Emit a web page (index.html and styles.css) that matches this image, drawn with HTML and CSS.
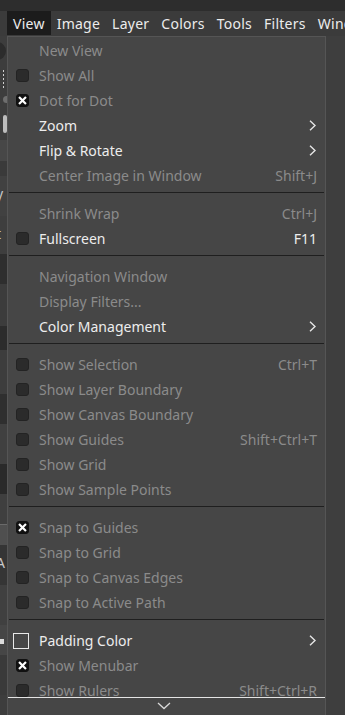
FILE: index.html
```html
<!DOCTYPE html>
<html>
<head>
<meta charset="utf-8">
<link rel="stylesheet" href="styles.css">
</head>
<body>
<div class="screen">
  <div class="topstrip"></div>
  <div class="menubar">
    <span class="mb-item active">View</span>
    <span class="mb-item">Image</span>
    <span class="mb-item">Layer</span>
    <span class="mb-item">Colors</span>
    <span class="mb-item">Tools</span>
    <span class="mb-item">Filters</span>
    <span class="mb-item">Windows</span>
  </div>
  <div class="workspace">
    <div class="dock">
      <div class="band b1"><span class="dot-circle"></span></div>
      <div class="band b2"><span class="dots"></span></div>
      <div class="band b3"><span class="grey-dot"></span></div>
      <div class="band b4"><span class="squiggle"></span></div>
      <div class="band b5"></div>
      <div class="band b6"></div>
      <div class="band b7"><span class="frag">y</span></div>
      <div class="band b8"><span class="frag">t</span></div>
      <div class="band b9"></div>
      <div class="band b10"></div>
      <div class="band b11"></div>
      <div class="band b12"></div>
      <div class="band b13"></div>
      <div class="band b14"></div>
      <div class="band b15"></div>
      <div class="band b16"></div>
      <div class="band b17"></div>
      <div class="band b18"><span class="frag">A</span></div>
      <div class="band b19"></div>
      <div class="band b20"><span class="tick"></span></div>
      <div class="band b21"></div>
    </div>
    <div class="canvas"></div>
  </div>

  <div class="menu">
    <div class="menu-scroll">
      <div class="row dis"><span class="chk"></span><span class="label">New View</span></div>
      <div class="row dis"><span class="chk"><span class="box"></span></span><span class="label">Show All</span></div>
      <div class="row dis"><span class="chk"><span class="box on"><svg viewBox="0 0 13 13" width="13" height="13"><path d="M3.8 3.8 L9.2 9.2 M9.2 3.8 L3.8 9.2" stroke="#fff" stroke-width="2.2" stroke-linecap="square" fill="none"/></svg></span></span><span class="label">Dot for Dot</span></div>
      <div class="row"><span class="chk"></span><span class="label">Zoom</span><svg class="arrow" viewBox="0 0 7 11" width="7" height="11"><path d="M1 0.8 L6 5.5 L1 10.2" stroke="#e6e6e6" stroke-width="1.4" fill="none"/></svg></div>
      <div class="row"><span class="chk"></span><span class="label">Flip &amp; Rotate</span><svg class="arrow" viewBox="0 0 7 11" width="7" height="11"><path d="M1 0.8 L6 5.5 L1 10.2" stroke="#e6e6e6" stroke-width="1.4" fill="none"/></svg></div>
      <div class="row dis"><span class="chk"></span><span class="label">Center Image in Window</span><span class="sc">Shift+J</span></div>
      <div class="sep"></div>
      <div class="row dis"><span class="chk"></span><span class="label">Shrink Wrap</span><span class="sc">Ctrl+J</span></div>
      <div class="row"><span class="chk"><span class="box"></span></span><span class="label">Fullscreen</span><span class="sc">F11</span></div>
      <div class="sep"></div>
      <div class="row dis"><span class="chk"></span><span class="label">Navigation Window</span></div>
      <div class="row dis"><span class="chk"></span><span class="label">Display Filters...</span></div>
      <div class="row"><span class="chk"></span><span class="label">Color Management</span><svg class="arrow" viewBox="0 0 7 11" width="7" height="11"><path d="M1 0.8 L6 5.5 L1 10.2" stroke="#e6e6e6" stroke-width="1.4" fill="none"/></svg></div>
      <div class="sep"></div>
      <div class="row dis"><span class="chk"><span class="box"></span></span><span class="label">Show Selection</span><span class="sc">Ctrl+T</span></div>
      <div class="row dis"><span class="chk"><span class="box"></span></span><span class="label">Show Layer Boundary</span></div>
      <div class="row dis"><span class="chk"><span class="box"></span></span><span class="label">Show Canvas Boundary</span></div>
      <div class="row dis"><span class="chk"><span class="box"></span></span><span class="label">Show Guides</span><span class="sc">Shift+Ctrl+T</span></div>
      <div class="row dis"><span class="chk"><span class="box"></span></span><span class="label">Show Grid</span></div>
      <div class="row dis"><span class="chk"><span class="box"></span></span><span class="label">Show Sample Points</span></div>
      <div class="sep"></div>
      <div class="row dis"><span class="chk"><span class="box on"><svg viewBox="0 0 13 13" width="13" height="13"><path d="M3.8 3.8 L9.2 9.2 M9.2 3.8 L3.8 9.2" stroke="#fff" stroke-width="2.2" stroke-linecap="square" fill="none"/></svg></span></span><span class="label">Snap to Guides</span></div>
      <div class="row dis"><span class="chk"><span class="box"></span></span><span class="label">Snap to Grid</span></div>
      <div class="row dis"><span class="chk"><span class="box"></span></span><span class="label">Snap to Canvas Edges</span></div>
      <div class="row dis"><span class="chk"><span class="box"></span></span><span class="label">Snap to Active Path</span></div>
      <div class="sep"></div>
      <div class="row"><span class="chk wide"><span class="swatch"></span></span><span class="label">Padding Color</span><svg class="arrow" viewBox="0 0 7 11" width="7" height="11"><path d="M1 0.8 L6 5.5 L1 10.2" stroke="#e6e6e6" stroke-width="1.4" fill="none"/></svg></div>
      <div class="row dis"><span class="chk"><span class="box on"><svg viewBox="0 0 13 13" width="13" height="13"><path d="M3.8 3.8 L9.2 9.2 M9.2 3.8 L3.8 9.2" stroke="#fff" stroke-width="2.2" stroke-linecap="square" fill="none"/></svg></span></span><span class="label">Show Menubar</span></div>
      <div class="row dis"><span class="chk"><span class="box"></span></span><span class="label">Show Rulers</span><span class="sc">Shift+Ctrl+R</span></div>
      <div class="row dis"><span class="chk"><span class="box"></span></span><span class="label">Show Scrollbars</span></div>
    </div>
    <div class="scroll-arrow">
      <svg viewBox="0 0 14 8" width="14" height="8"><path d="M1 1 L7 6.5 L13 1" stroke="#d8d8d8" stroke-width="1.3" fill="none"/></svg>
    </div>
  </div>
</div>
</body>
</html>
```

FILE: styles.css
```css
html, body {
  margin: 0;
  padding: 0;
  background: #3d3d3d;
}
.screen {
  position: relative;
  width: 345px;
  height: 715px;
  overflow: hidden;
  font-family: "Noto Sans", "Open Sans", sans-serif;
  font-size: 14px;
  display: flex;
  flex-direction: column;
}
.topstrip {
  height: 11px;
  background: #2d2d2d;
  flex: none;
}
.menubar {
  height: 25px;
  flex: none;
  background: #3b3b3b;
  display: flex;
  align-items: stretch;
  padding-left: 7px;
  white-space: nowrap;
  overflow: hidden;
}
.mb-item {
  display: flex;
  align-items: center;
  padding: 0 6px;
  color: #ececec;
  height: 24px;
  letter-spacing: 0.25px;
  flex: none;
}
.mb-item.active {
  background: #1c1c1c;
}
.workspace {
  flex: 1;
  display: flex;
}
.dock {
  width: 7px;
  flex: none;
  display: flex;
  flex-direction: column;
  overflow: hidden;
}
.canvas {
  flex: 1;
  background: #3e3e3e;
}
.band {
  position: relative;
  background: #3d3d3d;
  overflow: hidden;
}
.b1 { height: 30px; }
.b2 { height: 30px; }
.b3 { height: 14px; }
.b4 { height: 30px; }
.b5 { height: 21px; background: #474747; }
.b6 { height: 15px; background: #3a3a3a; }
.b7 { height: 40px; background: #414141; }
.b8 { height: 38px; background: #3e3e3e; }
.b9 { height: 30px; background: #2e2e2e; }
.b10 { height: 42px; background: #3c3c3c; }
.b11 { height: 24px; background: #2c2c2c; }
.b12 { height: 44px; background: #3d3d3d; }
.b13 { height: 30px; background: #2f2f2f; }
.b14 { height: 40px; background: #404040; }
.b15 { height: 30px; background: #2a2a2a; }
.b16 { height: 30px; background: #3f3f3f; }
.b17 { height: 20px; background: #4f4f4f; border-top: 1px solid #6a6a6a; }
.b18 { height: 40px; background: #353535; }
.b19 { height: 40px; background: #404040; }
.b20 { height: 30px; background: #464646; }
.b21 { height: 40px; background: #3a3a3a; }
.dot-circle {
  position: absolute;
  left: -12px;
  top: 6px;
  width: 18px;
  height: 18px;
  border-radius: 50%;
  background: #2c2c2c;
}
.dots {
  position: absolute;
  left: 3px;
  top: 4px;
  width: 1px;
  height: 20px;
  background: repeating-linear-gradient(#cfcfcf 0 2px, transparent 2px 4px);
}
.grey-dot {
  position: absolute;
  left: 3px;
  top: 0px;
  width: 7px;
  height: 7px;
  border-radius: 50%;
  background: #6e6e6e;
}
.squiggle {
  position: absolute;
  left: 3px;
  top: 5px;
  width: 4px;
  height: 18px;
  border-radius: 2px;
  background: #bdbdbd;
}
.frag {
  position: absolute;
  left: -4px;
  top: 8px;
  color: #c8c8c8;
  font-size: 14px;
}
.tick {
  position: absolute;
  left: 0;
  top: 14px;
  width: 4px;
  height: 5px;
  background: #dcdcdc;
}

/* dropdown menu */
.menu {
  position: absolute;
  left: 7px;
  top: 36px;
  width: 317px;
  bottom: 0;
  background: #464646;
  border: 1px solid #555555;
  border-bottom: none;
  display: flex;
  flex-direction: column;
}
.menu-scroll {
  height: 659px;
  padding-top: 1px;
  overflow: hidden;
  flex: none;
}
.row {
  height: 25px;
  display: flex;
  align-items: center;
  padding-right: 8px;
  color: #8b8b8b;
  white-space: nowrap;
}
.row:not(.dis) {
  color: #ededed;
}
.chk {
  width: 31px;
  flex: none;
  display: flex;
  align-items: center;
  padding-left: 8px;
  box-sizing: border-box;
}
.chk.wide {
  padding-left: 5px;
}
.box {
  width: 13px;
  height: 13px;
  box-sizing: border-box;
  border-radius: 3px;
  background: #2b2b2b;
  border: 1px solid #232323;
  display: block;
}
.box.on {
  background: #111111;
  border-color: #111111;
  position: relative;
}
.box.on svg {
  position: absolute;
  left: -1px;
  top: -1px;
}
.swatch {
  width: 16px;
  height: 16px;
  box-sizing: border-box;
  border: 1.5px solid #e8e8e8;
  display: block;
}
.label {
  flex: 1;
}
.sc {
  flex: none;
}
.arrow {
  flex: none;
  margin-right: 1px;
}
.sep {
  height: 1px;
  background: #1f1f1f;
  margin: 4px 1px 8px;
}
.scroll-arrow {
  flex: 1;
  border-top: 1px solid #e4e4e4;
  display: flex;
  justify-content: center;
  padding-top: 4px;
  padding-right: 6px;
}
.scroll-arrow svg {
  display: block;
}
```
